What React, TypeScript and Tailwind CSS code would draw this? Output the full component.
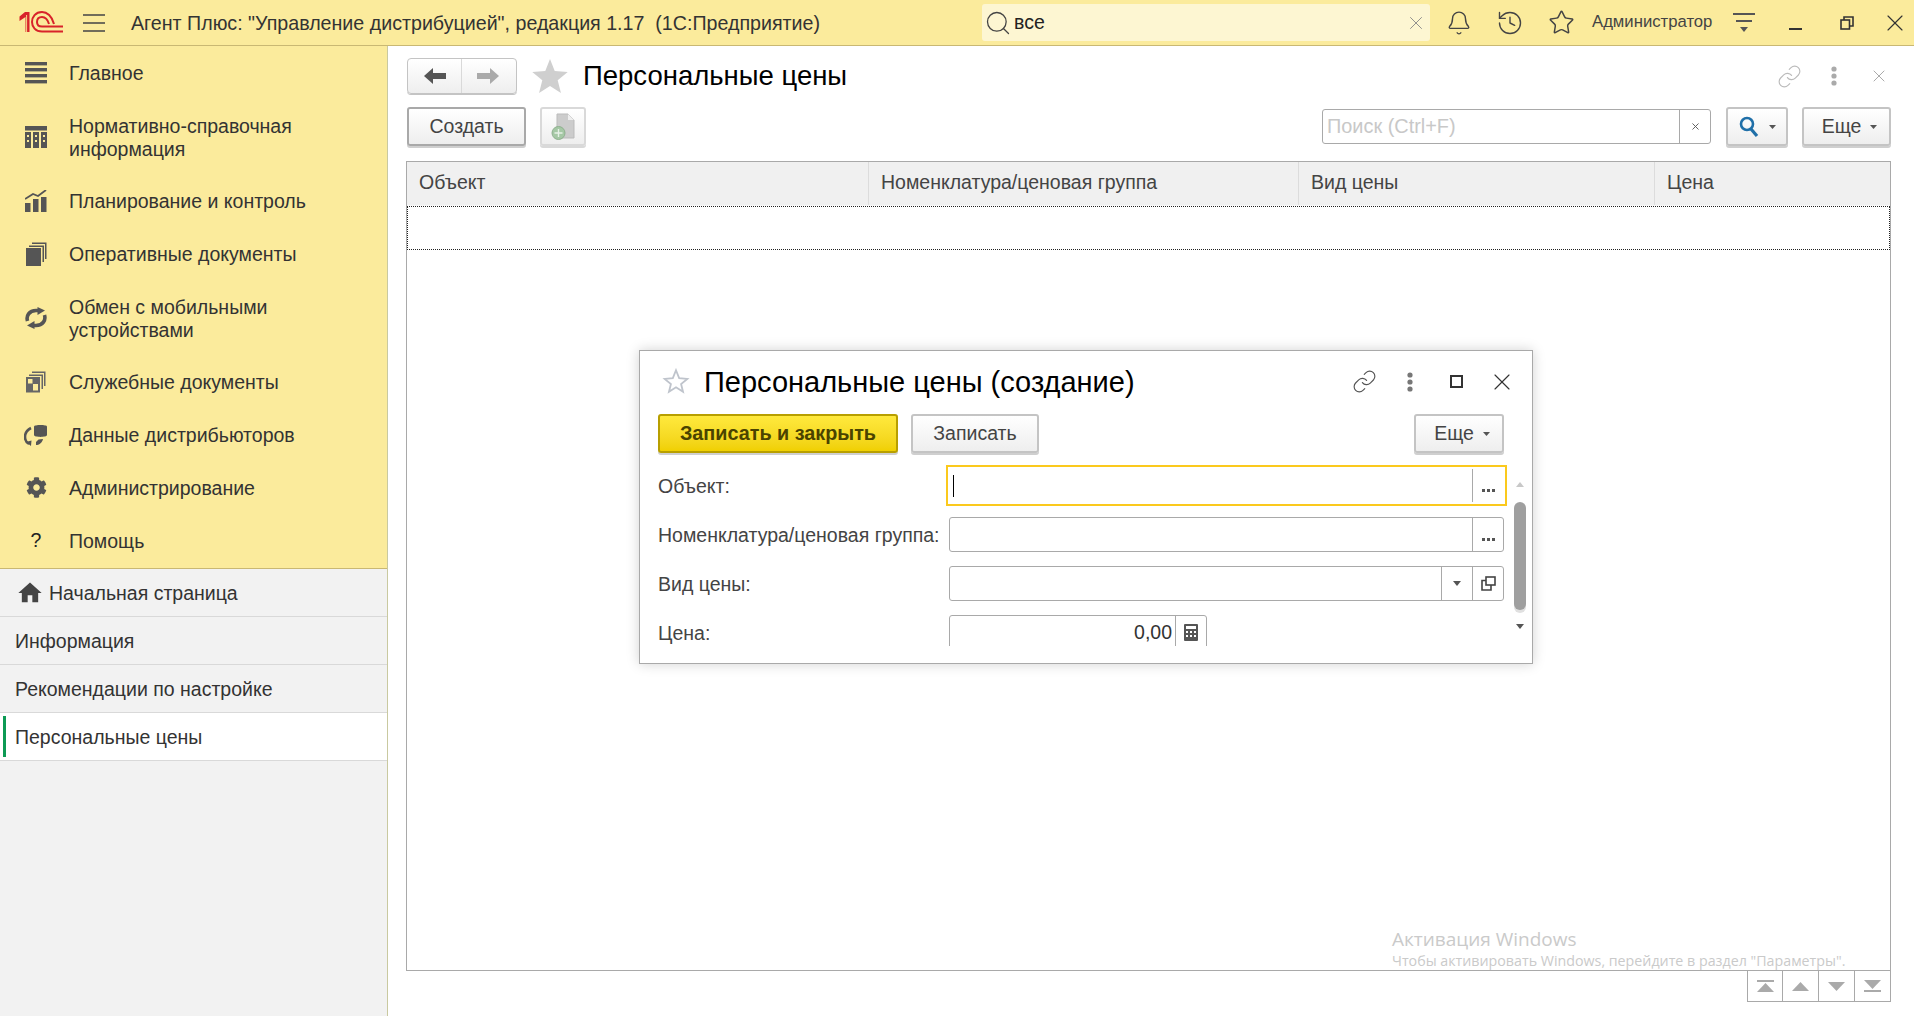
import React from "react";
import { FaCog } from "react-icons/fa";
import { MdHome } from "react-icons/md";
import { Bell, History, Star, Link, X, Search } from "lucide-react";

const Logo = () => (
  <svg width="44" height="22" viewBox="0 0 44 22" fill="none" stroke="#d8232a">
    <path d="M0.5 5.5 L6 1 H10.5 V21 H6.5 V6 L0.5 10 Z" fill="#d8232a" stroke="none" />
    <path d="M7.6 4 V21" stroke="#f7d98a" strokeWidth="1" />
    <path d="M35 13 C33 5 28 1 23 1 C16.5 1 13 6 13 11 C13 16 16.5 20.5 23 20.5 H44" strokeWidth="2" />
    <path d="M30 13 C28.5 8 26 6 23 6 C19.5 6 18 8.5 18 11 C18 13.5 19.5 15.5 23 15.5 H44" strokeWidth="2" />
  </svg>
);

const Burger = () => (
  <svg width="22" height="18" viewBox="0 0 22 18" stroke="#444" strokeWidth="1.5">
    <path d="M0 1H22M0 9H22M0 17H22" />
  </svg>
);

const IMain = () => (
  <svg width="22" height="22" viewBox="0 0 22 22" fill="#555">
    <rect y="0" width="22" height="3.4" />
    <rect y="6" width="22" height="3.4" />
    <rect y="12" width="22" height="3.4" />
    <rect y="18" width="22" height="3.4" />
  </svg>
);
const INsi = () => (
  <svg width="22" height="22" viewBox="0 0 22 22" fill="#555">
    <rect y="0" width="22" height="4.5" />
    <rect y="6" width="6" height="16" />
    <rect x="8" y="6" width="6" height="16" />
    <rect x="16" y="6" width="6" height="16" />
    <path d="M2 9h2v2H2zM10 9h2v2h-2zM18 9h2v2h-2zM2 14h2v2H2zM10 14h2v2h-2zM18 14h2v2h-2z" fill="#fbeb9c" />
  </svg>
);
const IPlan = () => (
  <svg width="22" height="22" viewBox="0 0 22 22" fill="#555">
    <rect x="0" y="13" width="5.5" height="9" />
    <rect x="8" y="9" width="5.5" height="13" />
    <rect x="16" y="7" width="5.5" height="15" />
    <path d="M0 9 L8 4 L13 6 L21 0" fill="none" stroke="#555" strokeWidth="1.8" />
  </svg>
);
const IDocs = () => (
  <svg width="22" height="24" viewBox="0 0 22 24" fill="#555">
    <rect x="1" y="6" width="15" height="18" />
    <path d="M4 3.5H19V20H17.5V5H4Z" />
    <path d="M7 0.5H21.5V17H20V2H7Z" />
  </svg>
);
const ISync = () => (
  <svg width="22" height="22" viewBox="0 0 22 22" fill="none" stroke="#555" strokeWidth="3.6">
    <path d="M2.5 14C1 9 4 3.5 11 3.5H14" />
    <path d="M19.5 8C21 13 18 18.5 11 18.5H8" />
    <path d="M12.5 0L20 3.5L12.5 8Z" fill="#555" stroke="none" />
    <path d="M9.5 22L2 18.5L9.5 14Z" fill="#555" stroke="none" />
  </svg>
);
const IServ = () => (
  <svg width="20" height="22" viewBox="0 0 20 22" fill="#666">
    <path fillRule="evenodd" d="M0 6H14V21.5H0ZM2 8V12.5H6.5V8ZM7 13V19.5H12V13Z" />
    <path d="M3 3.5H17V18H15.5V5H3Z" />
    <path d="M6 0.5H19.5V15H18V2H6Z" />
  </svg>
);
const IData = () => (
  <svg width="24" height="22" viewBox="0 0 24 22" fill="#555">
    <path d="M10 2.5C10 0.5 23 0.5 23 2.5V11C23 13.5 10 13.5 10 11Z" />
    <path d="M7 4C3 6 1 9 1 13C1 16 2.5 18.5 5 20" fill="none" stroke="#555" strokeWidth="2.6" />
    <path d="M2 18L7.5 16.5L7 22Z" />
    <path d="M12 21C15 21 18 19 19 15L14.5 15.5L12 18Z" />
  </svg>
);

const Tri = ({ up, c = "#555", w = 8, h = 5 }: { up?: boolean; c?: string; w?: number; h?: number }) => (
  <svg width={w} height={h} viewBox="0 0 8 5" fill={c} preserveAspectRatio="none">
    <path d={up ? "M4 0L8 5H0Z" : "M0 0H8L4 5Z"} />
  </svg>
);

const menu: { t: string[]; i: React.ReactNode }[] = [
  { t: ["Главное"], i: <IMain /> },
  { t: ["Нормативно-справочная", "информация"], i: <INsi /> },
  { t: ["Планирование и контроль"], i: <IPlan /> },
  { t: ["Оперативные документы"], i: <IDocs /> },
  { t: ["Обмен с мобильными", "устройствами"], i: <ISync /> },
  { t: ["Служебные документы"], i: <IServ /> },
  { t: ["Данные дистрибьюторов"], i: <IData /> },
  { t: ["Администрирование"], i: <FaCog size={21} color="#555" /> },
  { t: ["Помощь"], i: <span className="text-[19.5px] text-[#222]">?</span> },
];

const Btn = ({ className = "", children }: { className?: string; children: React.ReactNode }) => (
  <div
    className={`flex items-center justify-center h-[39px] rounded-[3px] border-2 border-[#c4c4c4] bg-gradient-to-b from-white to-[#eeeeee] shadow-[0_2px_0_#cfcfcf] text-[19.5px] text-[#444] ${className}`}
  >
    {children}
  </div>
);

const Dots = ({ c, s = 4 }: { c: string; s?: number }) => (
  <svg width={s + 2} height={s * 5} viewBox="0 0 6 20" fill={c}>
    <circle cx="3" cy="3" r="2.6" />
    <circle cx="3" cy="10" r="2.6" />
    <circle cx="3" cy="17" r="2.6" />
  </svg>
);

const Ellipsis = () => (
  <div className="w-[31px] h-full border-l border-[#a9a9a9] flex items-end justify-center pb-[10px] gap-[2px]">
    <span className="w-[3px] h-[3px] bg-[#555]" />
    <span className="w-[3px] h-[3px] bg-[#555]" />
    <span className="w-[3px] h-[3px] bg-[#555]" />
  </div>
);

const Field = ({ className = "", children }: { className?: string; children?: React.ReactNode }) => (
  <div className={`flex items-center justify-end h-[35px] w-[555px] rounded-[3px] border border-[#a9a9a9] bg-white ${className}`}>
    {children}
  </div>
);

const Label = ({ children }: { children: React.ReactNode }) => (
  <div className="w-[291px] mt-[2px] text-[19.5px] text-[#444] whitespace-nowrap">{children}</div>
);

const Pager = ({ i, first }: { i: React.ReactNode; first?: boolean }) => (
  <div className={`w-[36px] h-[31px] border-b border-r border-[#a9a9a9] flex flex-col items-center justify-center ${first ? "border-l" : ""}`}>
    {i}
  </div>
);

const colClass = "h-full flex items-center border-r border-[#dcdcdc] pl-[12px] pb-[1px] text-[19.5px] text-[#444]";

export default function App() {
  return (
    <div className="relative w-[1914px] h-[1016px] overflow-hidden flex flex-col bg-white [font-family:'Liberation_Sans',Arial,sans-serif] text-[#333]">
      {/* Top bar */}
      <header className="h-[46px] shrink-0 flex items-center bg-[#fbeb9c] border-b border-[#c9b873]">
        <div className="ml-[19px] w-[44px] h-[22px] -mt-[2px]"><Logo /></div>
        <div className="ml-[20px] w-[22px] flex"><Burger /></div>
        <div className="ml-[26px] mt-[2px] w-[851px] text-[19.65px] text-[#333] whitespace-nowrap">
          Агент Плюс: "Управление дистрибуцией", редакция 1.17&nbsp;&nbsp;(1С:Предприятие)
        </div>
        <div className="w-[448px] h-[37px] rounded-[3px] bg-[#fdf6d2] flex items-center pl-[2px] pr-[3px]">
          <Search size={28} strokeWidth={1.1} color="#444" />
          <span className="ml-[2px] text-[19.5px] text-[#222]">все</span>
          <X size={22} strokeWidth={1} color="#888" className="ml-auto" />
        </div>
        <div className="w-[58px] flex justify-center"><Bell size={26} strokeWidth={1.3} color="#444" /></div>
        <div className="w-[44px] flex justify-center"><History size={28} strokeWidth={1.2} color="#444" /></div>
        <div className="w-[58px] flex justify-center"><Star size={27} strokeWidth={1.3} color="#444" /></div>
        <div className="w-[119px] ml-[2px] text-[16.7px] text-[#444] whitespace-nowrap -mt-[2px]">Администратор</div>
        <div className="w-[64px] flex flex-col items-center gap-[5px] pl-[1px]">
          <span className="w-[22px] h-[2px] bg-[#555]" />
          <span className="w-[16px] h-[2px] bg-[#555]" />
          <Tri c="#555" />
        </div>
        <div className="w-[41px] flex justify-center pt-[13px]"><span className="w-[13px] h-[2px] bg-[#333]" /></div>
        <div className="w-[62px] flex justify-center">
          <svg width="14" height="14" viewBox="0 0 14 14" fill="none" stroke="#333" strokeWidth="1.6">
            <rect x="1" y="4" width="8.5" height="9" />
            <path d="M4 4V1H13V10H9.5" />
          </svg>
        </div>
        <div className="w-[33px] flex justify-center"><X size={28} strokeWidth={1} color="#333" /></div>
      </header>

      <div className="flex-1 flex min-h-0">
        {/* Sidebar */}
        <aside className="w-[388px] shrink-0 flex flex-col bg-[#f2f2f2] border-r border-[#c9c9a0]">
          <nav className="h-[523px] bg-[#fbeb9c] border-b border-[#c9b873] flex flex-col">
            {menu.map((m) => (
              <div key={m.t[0]} className={`flex items-center ${m.t.length > 1 ? "h-[75px]" : "h-[53px]"}`}>
                <div className="w-[72px] flex justify-center shrink-0">{m.i}</div>
                <div className="-ml-[3px] mt-[2px] text-[19.5px] leading-[23px] text-[#333] whitespace-nowrap">
                  {m.t.map((l) => <div key={l}>{l}</div>)}
                </div>
              </div>
            ))}
          </nav>
          <div className="h-[48px] flex items-center border-b border-[#d9d9d9] pl-[16px] text-[19.5px] text-[#333]">
            <MdHome size={28} color="#444" />
            <span className="ml-[5px] mt-[2px]">Начальная страница</span>
          </div>
          <div className="h-[48px] flex items-center border-b border-[#d9d9d9] pl-[15px] text-[19.5px] text-[#333]"><span className="mt-[2px]">Информация</span></div>
          <div className="h-[48px] flex items-center border-b border-[#d9d9d9] pl-[15px] text-[19.5px] text-[#333]"><span className="mt-[2px]">Рекомендации по настройке</span></div>
          <div className="h-[48px] flex items-center border-b border-[#d9d9d9] bg-white pl-[3px] text-[19.5px] text-[#333]">
            <span className="w-[3px] h-[41px] bg-[#0d9a54]" />
            <span className="ml-[9px] mt-[2px]">Персональные цены</span>
          </div>
        </aside>

        {/* Content */}
        <main className="flex-1 min-w-0 flex flex-col pt-[12px] pl-[18px] pr-[23px]">
          <div className="h-[36px] flex items-center">
            <div className="ml-[1px] w-[110px] h-[36px] flex rounded-[4px] border border-[#c4c4c4] bg-gradient-to-b from-white to-[#eeeeee] shadow-[0_1px_0_#c4c4c4]">
              <div className="w-[54px] flex items-center justify-center border-r border-[#d9d9d9]">
                <svg width="22" height="16" viewBox="0 0 22 16" fill="#555"><path d="M0 8L9 0V5H22V11H9V16Z" /></svg>
              </div>
              <div className="flex-1 flex items-center justify-center pr-[2px]">
                <svg width="22" height="16" viewBox="0 0 22 16" fill="#aaa"><path d="M22 8L13 0V5H0V11H13V16Z" /></svg>
              </div>
            </div>
            <svg className="ml-[15px]" width="36" height="34" viewBox="0 0 24 23" fill="#cfcfcf"><path d="M12 0L15.2 8.2L24 8.8L17.2 14.4L19.4 23L12 18.2L4.6 23L6.8 14.4L0 8.8L8.8 8.2Z" /></svg>
            <div className="ml-[15px] text-[27.5px] text-black whitespace-nowrap">Персональные цены</div>
            <div className="ml-auto flex items-center">
              <Link size={25} strokeWidth={1.1} color="#bbb" className="mr-[-3px]" />
              <div className="w-[70px] flex justify-center"><Dots c="#aaa" /></div>
              <X size={20} strokeWidth={1} color="#999" className="mr-[2px]" />
            </div>
          </div>

          <div className="mt-[13px] h-[39px] flex items-center">
            <Btn className="ml-[1px] w-[119px] !border-[#a9a9a9]">Создать</Btn>
            <div className="ml-[14px] w-[46px] h-[39px] rounded-[3px] border-2 border-[#d9d9d9] bg-gradient-to-b from-white to-[#eeeeee] shadow-[0_2px_0_#d9d9d9] flex items-center justify-center">
              <svg width="24" height="28" viewBox="0 0 24 28">
                <path d="M6 1H17L23 7V25H6Z" fill="#ccc" stroke="#bbb" />
                <path d="M17 1V7H23Z" fill="#eee" />
                <circle cx="7.5" cy="20" r="6.5" fill="#a5c8a5" stroke="#8fb08f" />
                <path d="M7.5 16V24M3.5 20H11.5" stroke="#e6f0e6" strokeWidth="1.4" />
              </svg>
            </div>
            <div className="ml-auto w-[389px] h-[35px] flex rounded-[3px] border border-[#a9a9a9] bg-white">
              <div className="flex-1 pl-[4px] flex items-center text-[19.9px] text-[#c8c8c8] whitespace-nowrap">Поиск (Ctrl+F)</div>
              <div className="w-[31px] border-l border-[#a9a9a9] flex items-center justify-center">
                <X size={11} strokeWidth={2} color="#555" />
              </div>
            </div>
            <Btn className="ml-[15px] w-[62px] gap-[10px]">
              <svg width="20" height="22" viewBox="0 0 20 22" fill="none" stroke="#1f6fa8"><circle cx="8" cy="8" r="6" strokeWidth="2.6" /><path d="M12 13L18 20" strokeWidth="3.2" /></svg>
              <Tri c="#555" w={7} h={4} />
            </Btn>
            <Btn className="ml-[14px] w-[89px] gap-[9px] pl-[6px]">
              Еще
              <Tri c="#555" w={7} h={4} />
            </Btn>
          </div>

          {/* Table */}
          <div className="mt-[15px] h-[810px] border border-[#a9a9a9] flex flex-col">
            <div className="h-[44px] flex bg-[#f0f0f0] border-b border-[#f8f8f8]">
              <div className={`w-[462px] ${colClass}`}>Объект</div>
              <div className={`w-[430px] ${colClass}`}>Номенклатура/ценовая группа</div>
              <div className={`w-[356px] ${colClass}`}>Вид цены</div>
              <div className={`flex-1 ${colClass} border-r-0`}>Цена</div>
            </div>
            <div className="h-[44px] border border-dotted border-[#222]" />
          </div>

          {/* Pager */}
          <div className="flex justify-end">
            <Pager first i={<><span className="w-[17px] h-[2px] bg-[#aaa] mb-[1px]" /><Tri up c="#aaa" w={17} h={9} /></>} />
            <Pager i={<Tri up c="#aaa" w={17} h={9} />} />
            <Pager i={<Tri c="#aaa" w={17} h={9} />} />
            <Pager i={<><Tri c="#aaa" w={17} h={9} /><span className="w-[17px] h-[2px] bg-[#aaa] mt-[1px]" /></>} />
          </div>
        </main>
      </div>

      {/* Windows watermark */}
      <div className="absolute left-[1392px] top-[926px] [font-family:'Open_Sans',sans-serif] text-[#cacaca] pointer-events-none">
        <div className="text-[19px] leading-[26px]">Активация Windows</div>
        <div className="text-[14.25px] leading-[20px] mt-[-1px] whitespace-nowrap">Чтобы активировать Windows, перейдите в раздел "Параметры".</div>
      </div>

      {/* Dialog */}
      <section className="absolute left-[639px] top-[350px] w-[894px] h-[314px] bg-white border border-[#a9a9a9] shadow-[0_0_12px_rgba(0,0,0,0.18)] flex flex-col">
        <div className="h-[63px] flex items-center pl-[22px] pr-[7px]">
          <svg className="-mt-[3px]" width="28" height="26" viewBox="0 0 24 23" fill="none" stroke="#bfc4cc" strokeWidth="1.6"><path d="M12 2L14.8 9L22 9.6L16.5 14.2L18.2 21L12 17L5.8 21L7.5 14.2L2 9.6L9.2 9Z" /></svg>
          <div className="ml-[14px] text-[29px] text-black whitespace-nowrap">Персональные цены (создание)</div>
          <div className="ml-auto -mt-[2px] flex items-center">
            <div className="w-[46px] flex justify-center"><Link size={25} strokeWidth={1.1} color="#555" /></div>
            <div className="w-[46px] flex justify-center"><Dots c="#777" /></div>
            <div className="w-[46px] flex justify-center"><span className="w-[13px] h-[13px] border-2 border-[#333]" /></div>
            <div className="w-[46px] flex justify-center"><X size={28} strokeWidth={1} color="#333" /></div>
          </div>
        </div>

        <div className="h-[39px] flex items-center pl-[18px]">
          <div className="w-[240px] h-[39px] rounded-[3px] border-2 border-[#b89f00] bg-gradient-to-b from-[#ffe93c] to-[#f0d000] shadow-[0_2px_0_#cfcfcf] flex items-center justify-center text-[19.8px] font-bold text-[#4a4300]">
            Записать и закрыть
          </div>
          <Btn className="ml-[13px] w-[128px]">Записать</Btn>
          <Btn className="ml-[375px] w-[90px] gap-[9px] pl-[6px]">
            Еще
            <Tri c="#555" w={7} h={4} />
          </Btn>
        </div>

        <div className="flex mt-[12px]">
          <div className="ml-[15px] w-[852px] h-[181px] overflow-hidden flex flex-col gap-[14px] pt-[3px] pl-[3px]">
            <div className="flex items-center shrink-0">
              <Label>Объект:</Label>
              <Field className="!border-transparent !rounded-none outline-2 outline-offset-[1px] outline-[#fbc91d]">
                <span className="w-[1px] h-[22px] bg-black mr-auto ml-[3px]" />
                <Ellipsis />
              </Field>
            </div>
            <div className="flex items-center shrink-0">
              <Label>Номенклатура/ценовая группа:</Label>
              <Field><Ellipsis /></Field>
            </div>
            <div className="flex items-center shrink-0">
              <Label>Вид цены:</Label>
              <Field>
                <div className="w-[31px] h-full border-l border-[#a9a9a9] flex items-center justify-center"><Tri c="#555" /></div>
                <div className="w-[31px] h-full border-l border-[#a9a9a9] flex items-center justify-center">
                  <svg width="15" height="15" viewBox="0 0 15 15" fill="none" stroke="#444" strokeWidth="1.6">
                    <rect x="5" y="1" width="9" height="8" />
                    <path d="M5 4.5H1V14H10V9" />
                  </svg>
                </div>
              </Field>
            </div>
            <div className="flex items-center shrink-0">
              <Label>Цена:</Label>
              <Field className="!w-[258px] pb-0">
                <span className="text-[19.5px] text-[#333] mr-[3px]">0,00</span>
                <div className="w-[31px] h-full border-l border-[#a9a9a9] flex items-center justify-center">
                  <svg width="14" height="17" viewBox="0 0 14 17" fill="#555">
                    <path fillRule="evenodd" d="M1 0H13A1 1 0 0 1 14 1V16A1 1 0 0 1 13 17H1A1 1 0 0 1 0 16V1A1 1 0 0 1 1 0ZM2 2V5H12V2ZM2 7V9H4V7ZM6 7V9H8V7ZM10 7V9H12V7ZM2 11V13H4V11ZM6 11V13H8V11ZM10 11V13H12V11Z" />
                  </svg>
                </div>
              </Field>
            </div>
          </div>
          <div className="ml-[7px] w-[12px] flex flex-col items-center pt-[17px]">
            <Tri up c="#c8c8c8" />
            <span className="mt-[15px] w-[12px] h-[108px] rounded-[6px] bg-[#9f9f9f] shadow-[0_3px_0_#e0e0e0]" />
            <span className="mt-[14px] flex"><Tri c="#555" /></span>
          </div>
        </div>
      </section>
    </div>
  );
}
